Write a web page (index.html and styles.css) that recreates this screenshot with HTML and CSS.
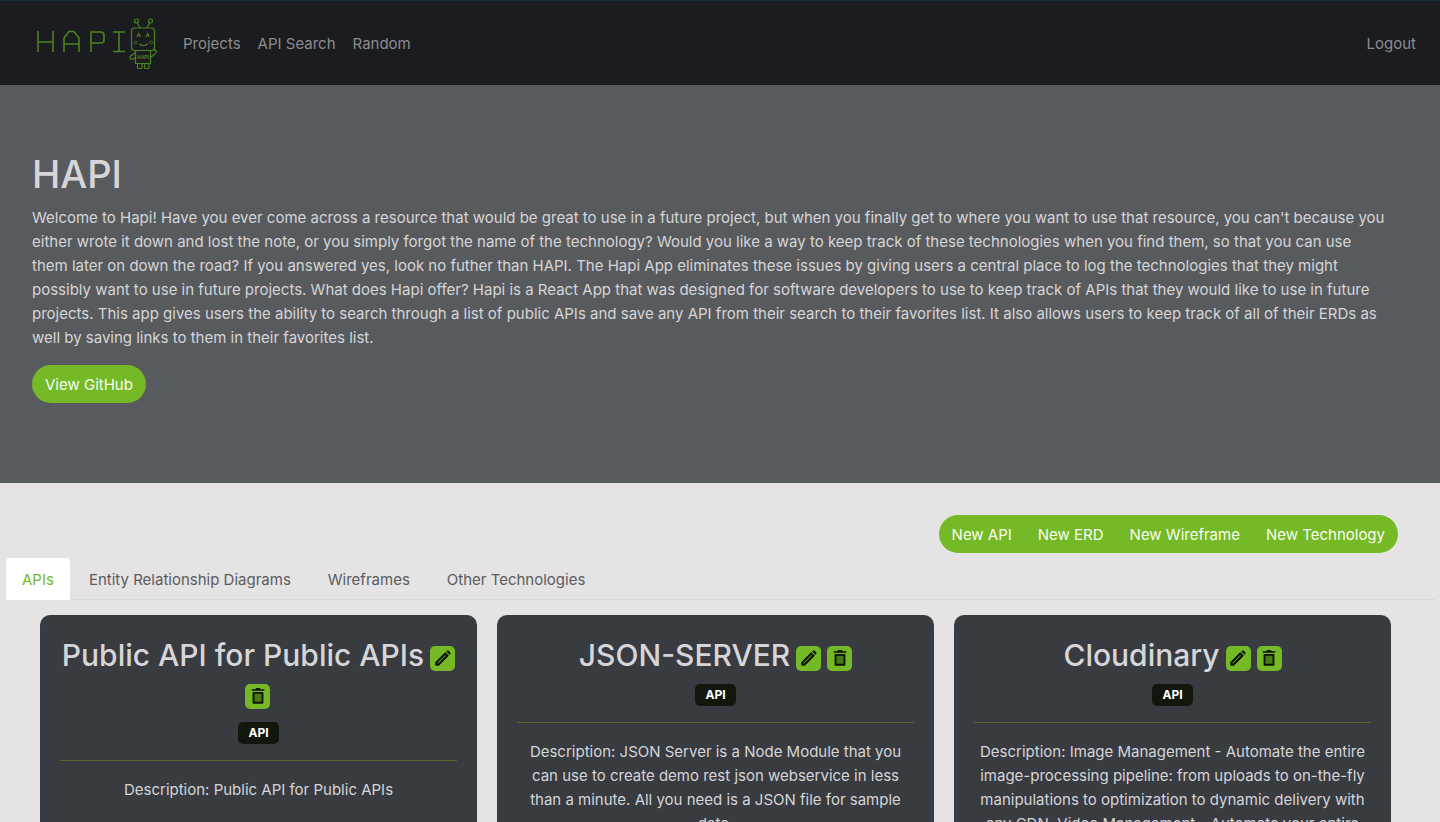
FILE: index.html
```html
<!DOCTYPE html>
<html lang="en">
<head>
<meta charset="utf-8">
<meta name="viewport" content="width=device-width, initial-scale=1">
<title>HAPI</title>
<link rel="stylesheet" href="styles.css">
</head>
<body>
<svg class="sprite" aria-hidden="true">
  <symbol id="pencil" viewBox="0 0 20 20">
    <path d="M2 18v-3.500L12.500 4l3.500 3.500L5.500 18z" fill="#0b1103" stroke="#0b1103" stroke-linejoin="round"/>
    <path d="M13.700 2.800l1-1q.7-.5 1.300 0l2.200 2.200q.5.700 0 1.300l-1 1z" fill="#0b1103"/>
    <path d="M4 16L12.800 7.200" stroke="#5d9320" stroke-width="1.200"/>
  </symbol>
  <symbol id="trash" viewBox="0 0 20 20">
    <path d="M3 2.500h4l1-1.500h4l1 1.500h4v1.800H3z" fill="#0b1103"/>
    <path d="M5 6.500h10v11H5z" fill="#4a7a18" stroke="#0b1103" stroke-width="2" stroke-linejoin="round"/>
  </symbol>
</svg>
<header class="navbar">
  <a class="brand" href="#" aria-label="HAPI home">
    <svg class="logo" viewBox="0 0 124 56" fill="none" stroke="#4a8420" aria-hidden="true">
      <g stroke-width="1.600">
        <path d="M2 15v21M17 15v21M2 26h15"/>
        <path d="M28 36V22l5-6.500h5l5 6.500v14M28 28h15"/>
        <path d="M55 36V16h10q3 0 3 3v5q0 3-3 3H55"/>
        <path d="M77 16h12M83 16v20M77 35.500h12"/>
      </g>
      <g stroke-width="1.200">
        <circle cx="100.500" cy="5" r="2"/><circle cx="114.500" cy="5" r="2"/>
        <path d="M101.500 7l2.500 5M113.500 7l-2.500 5"/>
        <rect x="95.500" y="12" width="23" height="22.500" rx="3"/>
        <path d="M101 21l1.700-3.500 1.700 3.500M110 21l1.700-3.500 1.700 3.500M103 28q4.500 3 9 0"/>
        <circle cx="99.500" cy="26.500" r="1.500" opacity=".6"/><circle cx="115" cy="26.500" r="1.500" opacity=".6"/>
        <path d="M99.500 35v12.500h15V35M99 37l-4.500 3q-2 4 2.500 3l2.500-1.500M115 41l4-3q3-4-1-3.500"/>
        <rect x="101.500" y="47.500" width="4.500" height="5" rx="1"/><rect x="108.500" y="47.500" width="4.500" height="5" rx="1"/>
      </g>
      <text class="logo-label" x="107" y="43" text-anchor="middle">HAPI</text>
    </svg>
  </a>
  <nav class="nav-links">
    <a href="#">Projects</a><a href="#">API Search</a><a href="#">Random</a>
  </nav>
  <button class="logout" type="button">Logout</button>
</header>
<main>
  <section class="hero">
    <h1>HAPI</h1>
    <p>Welcome to Hapi! Have you ever come across a resource that would be great to use in a future project, but when you finally get to where you want to use that resource, you can't because you either wrote it down and lost the note, or you simply forgot the name of the technology? Would you like a way to keep track of these technologies when you find them, so that you can use them later on down the road? If you answered yes, look no futher than HAPI. The Hapi App eliminates these issues by giving users a central place to log the technologies that they might possibly want to use in future projects. What does Hapi offer? Hapi is a React App that was designed for software developers to use to keep track of APIs that they would like to use in future projects. This app gives users the ability to search through a list of public APIs and save any API from their search to their favorites list. It also allows users to keep track of all of their ERDs as well by saving links to them in their favorites list.</p>
    <a class="btn" href="#">View GitHub</a>
  </section>
  <div class="actions">
    <div class="btn-group">
      <button type="button">New API</button><button type="button">New ERD</button><button type="button">New Wireframe</button><button type="button">New Technology</button>
    </div>
  </div>
  <div class="tabs" role="tablist">
    <button class="tab active" type="button" role="tab" aria-selected="true">APIs</button>
    <button class="tab" type="button" role="tab" aria-selected="false">Entity Relationship Diagrams</button>
    <button class="tab" type="button" role="tab" aria-selected="false">Wireframes</button>
    <button class="tab" type="button" role="tab" aria-selected="false">Other Technologies</button>
  </div>
  <section class="cards">
    <article class="card">
      <h2>Public API for Public APIs <button class="icon" type="button" aria-label="Edit"><svg><use href="#pencil"/></svg></button> <button class="icon" type="button" aria-label="Delete"><svg><use href="#trash"/></svg></button></h2>
      <span class="badge">API</span>
      <hr>
      <p>Description: Public API for Public APIs</p>
    </article>
    <article class="card">
      <h2>JSON-SERVER <button class="icon" type="button" aria-label="Edit"><svg><use href="#pencil"/></svg></button> <button class="icon" type="button" aria-label="Delete"><svg><use href="#trash"/></svg></button></h2>
      <span class="badge">API</span>
      <hr>
      <p>Description: JSON Server is a Node Module that you can use to create demo rest json webservice in less than a minute. All you need is a JSON file for sample data.</p>
    </article>
    <article class="card">
      <h2>Cloudinary <button class="icon" type="button" aria-label="Edit"><svg><use href="#pencil"/></svg></button> <button class="icon" type="button" aria-label="Delete"><svg><use href="#trash"/></svg></button></h2>
      <span class="badge">API</span>
      <hr>
      <p>Description: Image Management - Automate the entire image-processing pipeline: from uploads to on-the-fly manipulations to optimization to dynamic delivery with any CDN. Video Management - Automate your entire</p>
    </article>
  </section>
</main>
</body>
</html>
```
FILE: styles.css
```css
* { box-sizing: border-box; }
body {
  margin: 0;
  background: #e5e3e4;
  font: 15px/24px Inter, "Liberation Sans", sans-serif;
  color: #d6d5d8;
}
button { font: inherit; border: 0; background: none; cursor: pointer; }
a { text-decoration: none; }
.sprite { position: absolute; width: 0; height: 0; }

.navbar {
  display: flex;
  align-items: center;
  min-height: 85px;
  padding: 10px 16px 8px 32px;
  background: #1b1c20;
  border-top: 1px solid #122f3b;
}
.brand { display: flex; padding-left: 4px; margin-right: 15px; }
.logo { width: 124px; height: 56px; }
.logo-label { font: bold 5px "Liberation Sans", sans-serif; fill: #4a8420; stroke: none; }
.nav-links { display: flex; flex: 1; gap: 1px; }
.nav-links a, .logout { padding: 8px; color: #8b8c8e; }

.hero { padding: 65px 32px 80px; background: #585b5e; }
h1 { margin: 0 0 8px; font-size: 38px; line-height: 48px; font-weight: 500; }
.hero p { margin: 0 0 15px; padding-right: 20px; }
.btn, .btn-group button { display: inline-block; padding: 8px 13px 6px; color: #f7fdf0; }
.btn, .btn-group { background: #76b926; border-radius: 19px; }

.actions { display: flex; justify-content: flex-end; padding: 32px 42px 5px 16px; }
.btn-group { display: flex; }

.tabs { display: flex; gap: 1px; margin: 0 5px; padding-left: 1px; border-bottom: 1px solid #d6d8db; }
.tab { padding: 10px 18px 8px; margin-bottom: -1px; color: #5b5c5e; }
.tab.active { padding: 10px 16px 8px; background: #fff; color: #76b926; border-radius: 4px 4px 0 0; }

.cards {
  display: grid;
  grid-template-columns: repeat(3, 1fr);
  gap: 20px;
  padding: 15px 49px 20px 40px;
}
.card { padding: 21px 20px 20px; background: #383b40; border-radius: 10px; text-align: center; }
h2 { margin: 0 0 8px; font-size: 30px; line-height: 38px; font-weight: 500; }
.icon {
  display: inline-flex;
  align-items: center;
  justify-content: center;
  width: 25px;
  height: 25px;
  margin-left: -2px;
  padding: 0;
  border-radius: 5px;
  background: #76b926;
  vertical-align: -1px;
}
.icon svg { width: 18px; height: 18px; }
.badge {
  display: inline-block;
  padding: 3px 10px;
  border-radius: 5px;
  background: #11170c;
  color: #fff;
  font-size: 12px;
  line-height: 16px;
  font-weight: 700;
}
hr { margin: 16px 0 17px; border: 0; border-top: 1px solid #4f692b; }
.card p { margin: 0; }
```
